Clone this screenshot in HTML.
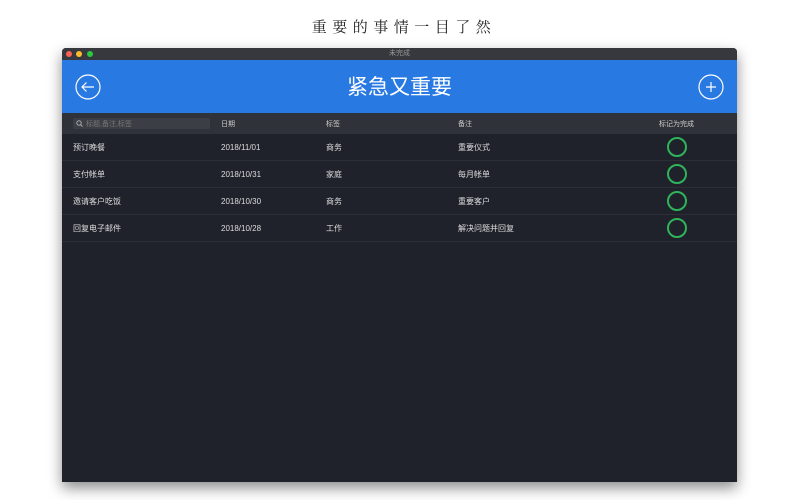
<!DOCTYPE html>
<html><head><meta charset="utf-8"><style>
*{margin:0;padding:0;box-sizing:border-box}
body{width:800px;height:500px;overflow:hidden;background:#fff;font-family:"Liberation Sans","Noto Sans CJK SC",sans-serif;position:relative}
.cap{position:absolute;top:16px;left:4px;width:800px;text-align:center;font-family:"Liberation Serif","Noto Serif CJK SC",serif;font-size:15px;letter-spacing:5.5px;color:#222}
.win{position:absolute;left:62px;top:48px;width:675px;height:434px;background:#1f222b;box-shadow:0 6px 14px rgba(0,0,0,.45);border-radius:4px 4px 0 0;overflow:hidden}
.tb{height:12px;background:#36383d;position:relative}
.tb span.d{position:absolute;top:3px;width:6px;height:6px;border-radius:50%}
.tb .t{position:absolute;left:0;width:100%;text-align:center;font-size:7px;color:#999;line-height:12px}
.hd{height:53px;background:#2979e3;position:relative;color:#fff}
.hd .ti{position:absolute;width:100%;text-align:center;top:11px;font-size:21px}
.ch{height:21px;background:#2f3238;position:relative;font-size:7px;color:#ccc}
.ch > div{position:absolute;top:0;height:21px;display:flex;align-items:center}
.row{height:27px;border-bottom:1px solid #2c2f37;position:relative;font-size:8px;color:#ddd}
.row div{position:absolute;top:0;height:27px;display:flex;align-items:center;line-height:1}
.row div.circ{width:20px;height:20px;border:2px solid #2fb35b;border-radius:50%;left:605px;top:3px}
</style></head><body>
<div class="cap">重要的事情一目了然</div>
<div class="win">
 <div class="tb"><span class="d" style="left:4px;background:#fc5f57"></span><span class="d" style="left:14px;background:#fdbc2e"></span><span class="d" style="left:25px;background:#29c840"></span><div class="t">未完成</div></div>
 <div class="hd">
  <svg style="position:absolute;left:13px;top:14px" width="26" height="26" viewBox="0 0 26 26"><circle cx="13" cy="13" r="12" fill="none" stroke="#fff" stroke-width="1.2"/><path d="M19 13H7M11.5 8.5L7 13l4.5 4.5" fill="none" stroke="#fff" stroke-width="1.2"/></svg>
  <div class="ti">紧急又重要</div>
  <svg style="position:absolute;left:636px;top:14px" width="26" height="26" viewBox="0 0 26 26"><circle cx="13" cy="13" r="12" fill="none" stroke="#fff" stroke-width="1.2"/><path d="M13 8v10M8 13h10" fill="none" stroke="#fff" stroke-width="1.2"/></svg>
 </div>
 <div class="ch">
  <div style="left:11px;top:5px;width:137px;height:11px;background:#3b3e45;border-radius:2px;color:#777;padding-left:13px">标题,备注,标签
   <svg style="position:absolute;left:3px;top:2px" width="7" height="7" viewBox="0 0 7 7"><circle cx="3" cy="3" r="2.2" fill="none" stroke="#aaa" stroke-width="1"/><path d="M4.6 4.6L6.5 6.5" stroke="#aaa" stroke-width="1"/></svg></div>
  <div style="left:159px">日期</div>
  <div style="left:264px">标签</div>
  <div style="left:396px">备注</div>
  <div style="left:597px">标记为完成</div>
 </div>
 <div class="row"><div style="left:11px">预订晚餐</div><div style="left:159px">2018/11/01</div><div style="left:264px">商务</div><div style="left:396px">重要仪式</div><div class="circ"></div></div>
 <div class="row"><div style="left:11px">支付帐单</div><div style="left:159px">2018/10/31</div><div style="left:264px">家庭</div><div style="left:396px">每月帐单</div><div class="circ"></div></div>
 <div class="row"><div style="left:11px">邀请客户吃饭</div><div style="left:159px">2018/10/30</div><div style="left:264px">商务</div><div style="left:396px">重要客户</div><div class="circ"></div></div>
 <div class="row"><div style="left:11px">回复电子邮件</div><div style="left:159px">2018/10/28</div><div style="left:264px">工作</div><div style="left:396px">解决问题并回复</div><div class="circ"></div></div>
</div>
</body></html>
